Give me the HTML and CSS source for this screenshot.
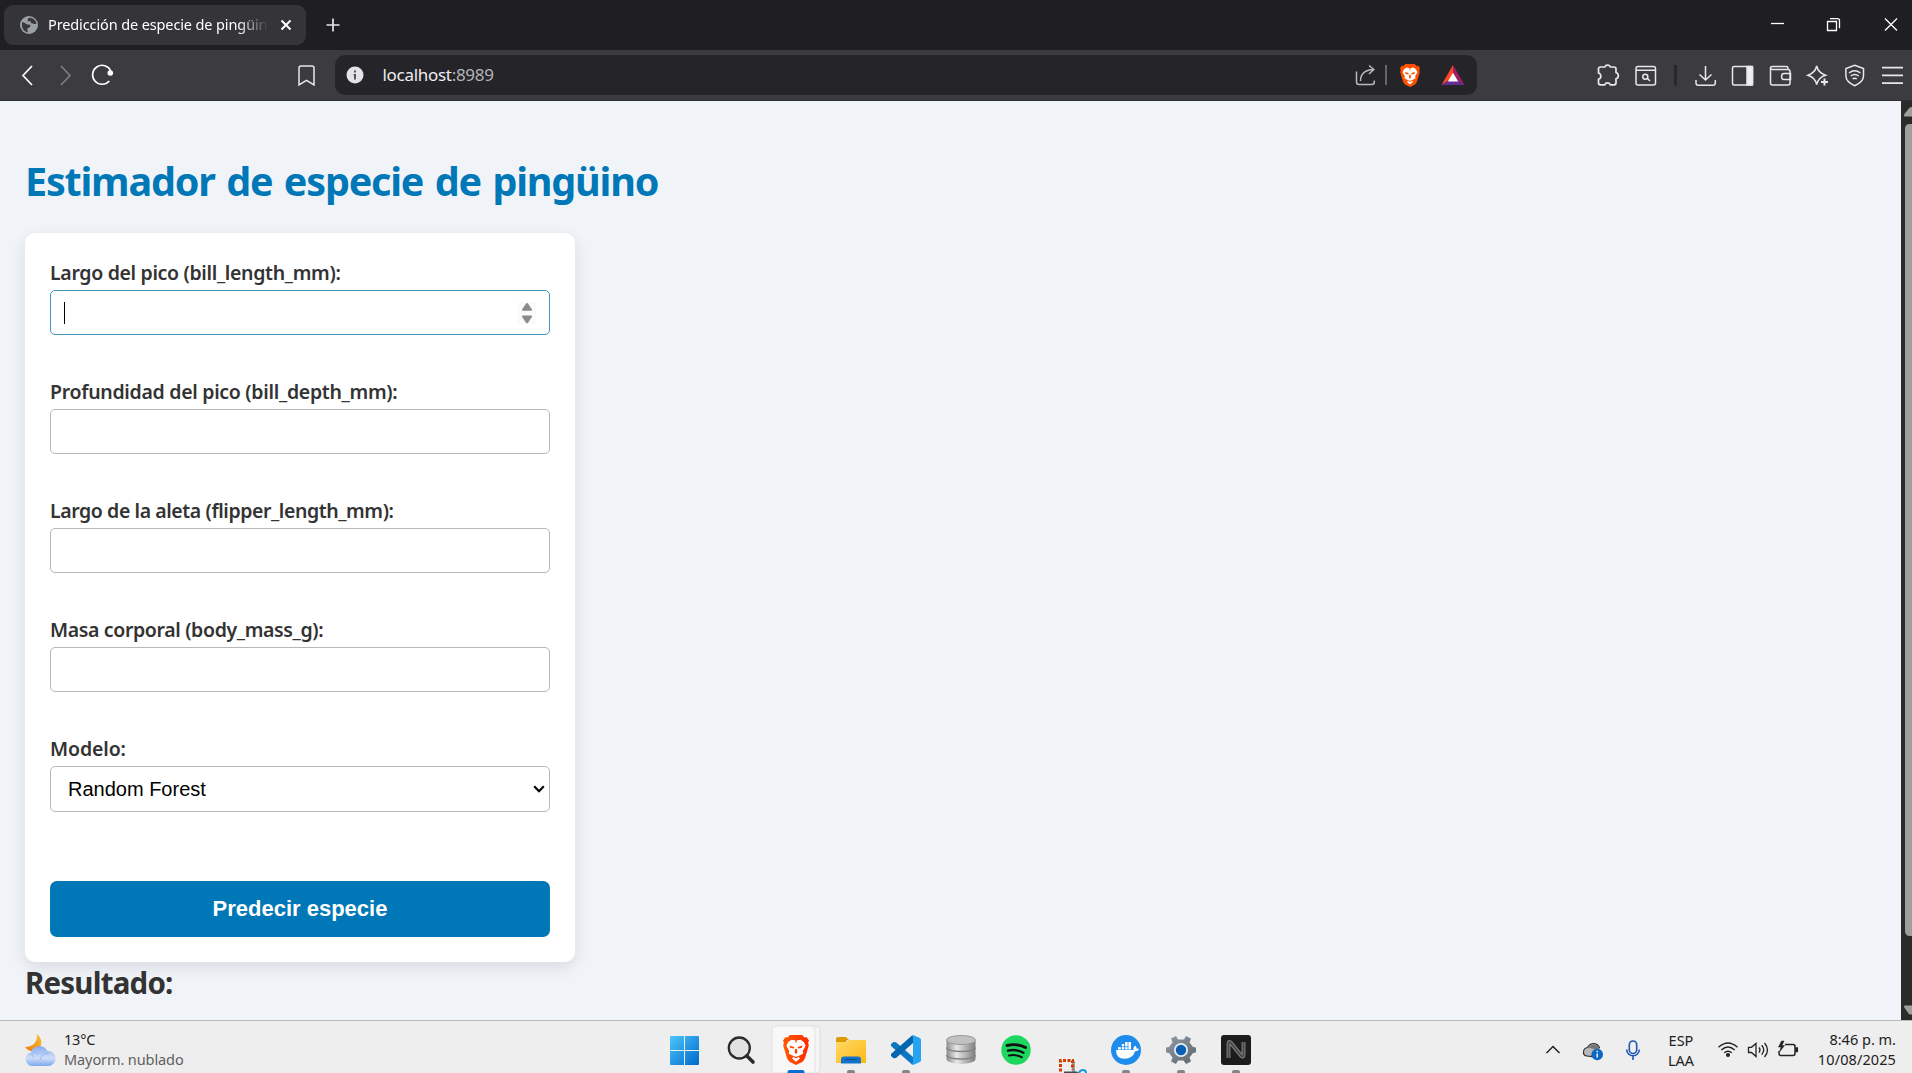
FILE: index.html
```html
<!DOCTYPE html>
<html lang="es">
<head>
<meta charset="utf-8">
<title>Predicción de especie de pingüino</title>
<link rel="stylesheet" href="styles.css">
</head>
<body>
<svg class="defs" width="0" height="0" aria-hidden="true">
  <defs>
    <linearGradient id="braveGrad" x1="0" x2="1" y1="0" y2="0"><stop offset="0" stop-color="#ff5a00"/><stop offset="1" stop-color="#ff2a00"/></linearGradient>
    <linearGradient id="winGrad" x1="0" y1="0" x2="1" y2="1"><stop offset="0" stop-color="#4cc8fa"/><stop offset="1" stop-color="#0067cc"/></linearGradient>
    <linearGradient id="folderGrad" x1="0" y1="0" x2="1" y2="1"><stop offset="0" stop-color="#ffd968"/><stop offset="1" stop-color="#fdb813"/></linearGradient>
    <linearGradient id="dbGrad"><stop offset="0" stop-color="#8c8c8c"/><stop offset=".35" stop-color="#e8e8e8"/><stop offset="1" stop-color="#7d7d7d"/></linearGradient>
    <linearGradient id="gearGrad" x1="0" y1="0" x2="1" y2="1"><stop offset="0" stop-color="#929ba3"/><stop offset="1" stop-color="#5c6670"/></linearGradient>
    <linearGradient id="cloudGrad" x1="0" y1="0" x2="0" y2="1"><stop offset="0" stop-color="#85aaf0"/><stop offset=".6" stop-color="#cfdff8"/><stop offset="1" stop-color="#7ea6ec"/></linearGradient>
    <linearGradient id="moonGrad" x1="1" y1="0" x2="0" y2="1"><stop offset="0" stop-color="#fbc02f"/><stop offset="1" stop-color="#ee7a13"/></linearGradient>
    <symbol id="lion" viewBox="0 0 26 30">
      <path d="M7 0h12l2.600 2.600 2.200-.3L26 5.700l-.9 2.100.7 2.800-3.900 13-2.300 3.200L13 30l-6.600-3.200-2.300-3.200-3.900-13 .7-2.800L0 5.700l2.200-3.400 2.200.3z"/>
      <path fill="#fff" d="M13 5.500l4.500-.8 3.300 2.300 1.900 3.800-2.400 4.100-.6 1.200.6 2.400-3.600 2.100-1 1 1.200 2-3.900 3.100-3.900-3.100 1.200-2-1-1-3.600-2.100.6-2.400-.6-1.200-2.400-4.100L5.200 7l3.300-2.300z"/>
      <path d="M6.500 10.500l4.800 1.400-.3 1.700-3.700-.6zM19.500 10.500l-4.800 1.400.3 1.700 3.700-.6zM12 14h2l.3 3.800-1.300 1.300-1.300-1.300zM9.400 20.600l3.600 1.500 3.600-1.500.4.700-4 2.300-4-2.300zM12.300 5h1.400l-.3 3h-.8z"/>
    </symbol>
  </defs>
</svg>

<header class="tabstrip">
  <div class="tab">
    <svg class="favicon" width="18" height="18" viewBox="0 0 18 18"><circle cx="9" cy="9" r="9" fill="#9aa0a6"/><path d="M2 6.500c3-.8 3 2 5.500 2 1.800 0 3.500.2 2.700 2-.8 1.500-3 1-3 3.500l1 2.200C4.500 16 1.500 12.500 2 8zM9 1.800c-1 1.500-1.800 2-1.300 3.200 1 .8 2-.3 3 .6.6.8 0 1.900 1.500 1.900 1.600.1 2.200 1 4.200.3C16 4.500 13 1.700 9 1.800z" fill="#38373c"/></svg>
    <span class="tab-title">Predicción de especie de pingüin</span>
    <svg width="12" height="12" viewBox="0 0 12 12" fill="none" stroke="#fff" stroke-width="2"><path d="M1.500 1.500l9 9M10.500 1.500l-9 9"/></svg>
  </div>
  <svg class="newtab" width="14" height="14" viewBox="0 0 14 14" stroke="#e6e6e8" stroke-width="1.700"><path d="M7 .5v13M.5 7h13"/></svg>
  <svg class="wincontrols" width="152" height="50" viewBox="1760 0 152 50" fill="none" stroke="#fff" stroke-width="1.300"><path d="M1771 23.500h13"/><path d="M1827.500 21.500h9v9h-9zM1830 18.700h7.500q2 0 2 2v7.500" /><path d="M1885 18.500l12 12M1897 18.500l-12 12"/></svg>
</header>

<nav class="toolbar">
  <svg width="45" height="50" viewBox="0 50 45 50" class="ic bold"><path d="M32 66l-9 9.500 9 9.500"/></svg>
  <svg width="40" height="50" viewBox="45 50 40 50" class="ic dim"><path d="M61 66l9 9.500-9 9.500"/></svg>
  <svg width="40" height="50" viewBox="85 50 40 50" class="ic reload"><path d="M110.800 71A9.500 9.500 0 1 0 109.300 81"/><circle cx="110.300" cy="73" r="2" fill="#fff"/></svg>
  <svg class="bookmark" width="50" height="50" viewBox="285 50 50 50"><g class="ic"><path d="M299 85V68q0-2 2-2h11q2 0 2 2v17l-7.500-4.700z"/></g></svg>
  <div class="address">
    <svg width="18" height="18" viewBox="0 0 18 18"><circle cx="9" cy="9" r="8.500" fill="#e3e3e8"/><path d="M8 4.500h2v2H8zM7.500 8H10v5.500H8V9.500h-.5z" fill="#55555a"/></svg>
    <span class="url">localhost<span class="port">:8989</span></span>
    <svg class="address-icons" width="131" height="40" viewBox="1346 55 131 40">
      <g fill="none" stroke="#b9b9bd" stroke-width="1.500"><path d="M1356.500 71.500v10.500q0 2.500 2.500 2.500h13q2.300 0 2.300-2.500v-1.500M1360.500 81c0-7 4-11 13-11.500M1369 65.500l4.800 4-4.800 4.500"/></g>
      <path d="M1386 65v20" stroke="#88888c" stroke-width="1.300"/>
      <svg x="1400" y="64" width="20" height="23" fill="#ff5000"><use href="#lion"/></svg>
      <path d="M1453 65l-11.500 20 11.500-7z" fill="#ff4724"/><path d="M1453 65l11.500 20-11.500-7z" fill="#9e1f63"/><path d="M1441.500 85h23l-11.500-8z" fill="#662d91"/><path d="M1453 72.800l-5.200 8.700h10.400z" fill="#fff"/>
    </svg>
  </div>
  <div class="actions">
    <svg width="37" height="50" viewBox="1590 50 37 50" class="ic puzzle"><path d="M1598.500 69q0-2 2-2h4.300a3 3 0 0 1 5.600 0h3.600q2 0 2 2v3.500a3.300 3.300 0 0 1 0 6.300v4q0 2-2 2h-3.700a3 3 0 0 0-5.600 0h-4.200q-2 0-2-2v-3.500a3.300 3.300 0 0 0 0-6.300z"/></svg>
    <svg width="38" height="50" viewBox="1627 50 38 50" class="ic"><rect x="1636" y="66.500" width="19.500" height="18.500" rx="2"/><path d="M1636 70.200h19.500M1647.500 78.500l2.500 2.500"/><circle cx="1645.300" cy="76.700" r="2.500"/></svg>
    <svg width="21" height="50" viewBox="1665 50 21 50"><path d="M1675.500 65v20.500" stroke="#242428" stroke-width="2.500"/></svg>
    <svg width="38" height="50" viewBox="1686 50 38 50" class="ic"><path d="M1705.500 66v13.500M1699.500 74.500l6 5.500 6-5.500M1696 80v3q0 2.300 2.300 2.300h14.700q2.300 0 2.300-2.300v-3"/></svg>
    <svg width="37" height="50" viewBox="1724 50 37 50" class="ic"><rect x="1732.500" y="66.500" width="20" height="18.500" rx="1.500"/><path d="M1747 66.500h5.500V85h-5.500z" fill="#efeff1"/></svg>
    <svg width="38" height="50" viewBox="1761 50 38 50" class="ic"><path d="M1770.500 68v15q0 2 2 2h15.500q2 0 2-2V71.500q0-2-2-2h-15.500q-2 0-2-1.700 0-1.300 2-1.300h14q1.500 0 1.500 2.500M1790.500 73.500h-6.500q-2.300 0-2.300 2.300v1.500q0 2.300 2.300 2.300h6.500z"/></svg>
    <svg width="37" height="50" viewBox="1799 50 37 50" class="ic"><path d="M1816.700 66c1 4.500 3.500 7.500 8.800 9.200-5.300 1.700-7.800 4.700-8.800 9.300-1-4.600-3.500-7.600-8.700-9.300 5.200-1.700 7.700-4.700 8.700-9.200z"/><path d="M1824.500 78.500v7M1821 82h7" stroke-width="2"/></svg>
    <svg width="37" height="50" viewBox="1836 50 37 50" class="ic"><path d="M1854.700 65.200l8.800 3.300v7.500c0 4-4 7.500-8.800 9.700-4.800-2.200-8.800-5.700-8.800-9.700v-7.500zM1849 73q5.700-4.500 11.400 0M1850.700 76q4-3.200 8 0M1852.600 79q2.100-1.600 4.200 0"/></svg>
    <svg width="39" height="50" viewBox="1873 50 39 50" class="ic"><path d="M1882 67.700h21M1882 75.400h21M1882 83.200h21" stroke-width="1.800"/></svg>
  </div>
</nav>

<div class="viewport">
  <main class="page">
    <h1>Estimador de especie de pingüino</h1>
    <form class="card">
      <div class="field"><label class="t1">Largo del pico (bill_length_mm):</label>
        <div class="input focused"><i class="caret"></i><svg width="18" height="22" viewBox="0 0 18 22" fill="#8b8b8b"><path fill="#fafafa" d="M0 0h18v22H0z"/><path d="M8 1.500q1-1 2 0l4 6q.3 1.200-1 1.200H5q-1.300 0-1-1.200zM8 20.800q1 1 2 0l4-6q.3-1.200-1-1.200H5q-1.300 0-1 1.200z"/></svg></div></div>
      <div class="field"><label class="t2">Profundidad del pico (bill_depth_mm):</label><div class="input"></div></div>
      <div class="field"><label class="t3">Largo de la aleta (flipper_length_mm):</label><div class="input"></div></div>
      <div class="field"><label class="t4">Masa corporal (body_mass_g):</label><div class="input"></div></div>
      <div class="field"><label class="t5">Modelo:</label>
        <div class="input select"><span>Random Forest</span><svg width="12" height="8" viewBox="0 0 12 8" fill="none" stroke="#000" stroke-width="2.200"><path d="M1.200 1.200L6 6.200l4.800-5"/></svg></div></div>
      <button class="submit" type="button">Predecir especie</button>
    </form>
    <h2>Resultado:</h2>
  </main>
  <svg class="scrollbar" width="11" height="919" viewBox="1901 101 11 919" fill="#9f9f9f"><path d="M1904 115.500q0-1 .8-2l4.500-5.500q1-1 2.700-1v9.500h-7q-1 0-1-1zM1912 124h-2q-5 0-5 5v802q0 5 5 5h2zM1904 1006.500q0-1 1-1h7v9h-1.500q-1.300-.2-2-1l-3.800-5.500q-.7-1-.7-1.500z"/></svg>
</div>

<footer class="taskbar">
  <div class="weather">
    <svg width="31" height="34" viewBox="0 0 31 34"><path d="M12 1c5 4 6 11 1 16-5 3-10 1-13-3 7 0 13-4 12-13z" fill="url(#moonGrad)"/><path d="M7 33a7 7 0 0 1-1-13.800A9 9 0 0 1 22.500 18 7.500 7.500 0 0 1 23.500 33z" fill="url(#cloudGrad)"/><path d="M9 25q-4-4 0-6 2 0 4 2M15 27q2-7 8.500-7" fill="none" stroke="#86aaf0" stroke-width="1" opacity=".7"/></svg>
    <div class="weather-text"><span class="temp">13°C</span><span class="sky">Mayorm. nublado</span></div>
  </div>
  <div class="apps">
    <svg width="57" height="52" viewBox="655 1021 57 52"><path fill="url(#winGrad)" d="M671 1036h13v14h-14v-13q0-1 1-1zM685 1036h13q1 0 1 1v13h-14zM670 1051h14v14h-13q-1 0-1-1zM685 1051h14v13q0 1-1 1h-13z"/></svg>
    <svg width="56" height="52" viewBox="712 1021 56 52" fill="none" stroke="#2b2b2b"><circle cx="739.300" cy="1048" r="10.500" fill="#e0e2e4" stroke-width="2.300"/><path d="M747 1056l6 6" stroke-width="3.600" stroke-linecap="round"/></svg>
    <svg width="56" height="52" viewBox="768 1021 56 52"><path d="M812 1026h3q5 0 5 5v37q0 5-5 5h-3z" fill="#f5f5f5" stroke="#dedede"/><path d="M777 1026h33q5 0 5 5v42h-43v-42q0-5 5-5z" fill="#f8f8f8" stroke="#e2e2e2"/><svg x="783" y="1035" width="26" height="30" fill="url(#braveGrad)"><use href="#lion"/></svg><rect x="787.500" y="1070" width="17" height="5" rx="2" fill="#0a6fd0"/></svg>
    <svg width="55" height="52" viewBox="824 1021 55 52"><path d="M836 1039q0-2 2-2h8l3 3h-2l-2 3h-9z" fill="#dd9a00"/><path d="M836 1042h10l3-2h16q1 0 1 1v22h-30z" fill="url(#folderGrad)"/><path d="M841 1063.500v-4q0-3 3-3h14q3 0 3 3v4z" fill="#1473c8"/><path d="M845 1059.500h12" stroke="#0a4a92" stroke-width="1"/><rect x="847" y="1070" width="8" height="5" rx="2" fill="#858585"/></svg>
    <svg width="54" height="52" viewBox="879 1021 54 52"><path d="M891 1044l2.500-2 2.500.3 17 14.700v7l-1 .5L891 1046z" fill="#0c78c4"/><path d="M891 1056l2.500 2.200 2.500-.3 17-15v-7l-1-.5L891 1054z" fill="#0566b0"/><path d="M913 1035l7 3 1 1.500v21l-1 1.500-7 3-1-.7 1-1.800v-25l-1-1.800z" fill="#27a4f0"/><rect x="902" y="1070" width="8" height="5" rx="2" fill="#858585"/></svg>
    <svg width="56" height="52" viewBox="933 1021 56 52"><path d="M946.500 1040v19a14.500 5 0 0 0 29 0v-19z" fill="url(#dbGrad)"/><g fill="none" stroke="#828282" stroke-width="1.300"><path d="M946.500 1047.500a14.500 4 0 0 0 29 0M946.500 1055a14.500 4 0 0 0 29 0"/></g><ellipse cx="961" cy="1040" rx="14.500" ry="4.500" fill="#c1c1c1" stroke="#999"/></svg>
    <svg width="55" height="52" viewBox="989 1021 55 52"><circle cx="1016" cy="1050" r="14.700" fill="#1ed760"/><g fill="none" stroke="#111" stroke-linecap="round"><path d="M1007 1045.500q10-2.500 18.500 2" stroke-width="2.900"/><path d="M1008 1050.700q8-2 15.500 2" stroke-width="2.400"/><path d="M1009 1055.500q6.500-1.600 13 1.800" stroke-width="1.900"/></g></svg>
    <svg width="55" height="52" viewBox="1044 1021 55 52"><path d="M1072 1061h3v12h-3z" fill="#999fa5"/><path d="M1060.500 1071.500v-11h12v9" fill="none" stroke="#d83b01" stroke-width="3" stroke-dasharray="3 1.500"/><path d="M1064 1071.500h13l2 2h-15z" fill="#45494d"/><path d="M1079 1073q1-3 4-3t3 3" fill="none" stroke="#1899e4" stroke-width="2"/></svg>
    <svg width="55" height="52" viewBox="1099 1021 55 52"><circle cx="1126" cy="1050" r="15" fill="#1d8ceb"/><path fill="#fff" d="M1116 1050h17.500q-.4-2.700 1.500-4.500 1.600 1 1.700 3 1.600-.3 2.500.4-1 2.300-4 2.400-2.600 7.500-10.700 7.500-8.500 0-8.500-8.800zM1118 1047h3v2.500h-3zM1121.500 1044h3v5.500h-3zM1125 1042h6v7.500h-6z"/><path d="M1117.500 1046.700h11M1121.200 1043v7M1124.700 1043v7M1128 1041v9" stroke="#1d8ceb" stroke-width=".7"/><rect x="1122" y="1070" width="8" height="5" rx="2" fill="#858585"/></svg>
    <svg width="55" height="52" viewBox="1154 1021 55 52"><path d="M1176 1036l2 3.500h6l2-3.500 5 2.500-1.500 4 3.500 4.500 3 .5v5l-3 .5-3.500 4.500 1.500 4-5 2.500-2.500-3.500h-5.500l-2 3.500-5-2.500 1.500-4-3.500-4.500-3-.5v-5l3-.5 3.500-4.500-1.500-4z" fill="url(#gearGrad)"/><circle cx="1181" cy="1050" r="7" fill="#e9edf0"/><circle cx="1181" cy="1050" r="5.200" fill="#0a5eb5"/><rect x="1177" y="1070" width="8" height="5" rx="2" fill="#858585"/></svg>
    <svg width="55" height="52" viewBox="1209 1021 55 52"><rect x="1221" y="1035" width="30" height="30" rx="3" fill="#1c1c1c"/><path d="M1228.500 1058v-14.500q0-2.500 2-1l11 13.500q2 1.500 2-1v-13" fill="none" stroke="#8a8a8a" stroke-width="3.800"/><path d="M1228.500 1058v-14.500q0-2.500 2-1l11 13.500q2 1.500 2-1v-13" fill="none" stroke="#484848" stroke-width="2"/><rect x="1232" y="1070" width="8" height="5" rx="2" fill="#858585"/></svg>
  </div>
  <div class="tray">
    <svg width="28" height="52" viewBox="1540 1021 28 52" class="tk"><path d="M1546.500 1053l6.500-6.500 6.500 6.500"/></svg>
    <svg width="47" height="52" viewBox="1568 1021 47 52"><path d="M1587 1056q-4-.5-3.500-4.500.5-3.500 4-4 2-4 6.500-4 4 .5 5.500 4l-8 9z" fill="#b9b9b9" stroke="#333" stroke-width="1.200"/><path d="M1588 1047.500q5-5.500 10.500-1l1 3h-4z" fill="#777"/><circle cx="1597.200" cy="1054.500" r="5.800" fill="#0a68c2"/><path d="M1597.200 1053.500v4M1597.200 1050.700v1.600" stroke="#fff" stroke-width="1.400"/></svg>
    <svg width="39" height="52" viewBox="1615 1021 39 52" fill="none" stroke="#1c58b4" stroke-width="1.600"><rect x="1629.300" y="1041" width="7.400" height="12.500" rx="3.700"/><path d="M1626.700 1049.500a6.300 6.300 0 0 0 12.600 0M1633 1056v4"/></svg>
    <div class="lang"><span>ESP</span><span>LAA</span></div>
    <svg width="35" height="52" viewBox="1708 1021 35 52" class="tk"><path d="M1718.500 1047.300q9.500-8.600 19 0M1721.300 1050q6.700-6 13.400 0M1724.200 1052.800q3.800-3.200 7.600 0" stroke-width="1.400"/><circle cx="1728" cy="1055" r="1.300" fill="#222"/></svg>
    <svg width="30" height="52" viewBox="1743 1021 30 52" class="tk"><path d="M1748.500 1047.300v5.200h3l4.500 4v-13l-4.500 3.800zM1759 1047.500q2 2.300 0 5M1761.700 1045.300q4 4.500 0 9.300M1764.500 1043q6 7 0 14" stroke-width="1.300"/></svg>
    <svg width="32" height="52" viewBox="1773 1021 32 52" class="tk"><path d="M1785 1044.500h8q2 0 2 2v7q0 2-2 2h-12q-2 0-2-2v-2.500"/><path d="M1796 1048h1.300v3.500h-1.300z" fill="#222"/><path d="M1781.500 1041l-3 6h2.500l-1.500 5 5-6.500h-2.500l2-4.500z" fill="#222" stroke-width=".5"/></svg>
    <div class="clock"><span>8:46 p. m.</span><span class="date">10/08/2025</span></div>
  </div>
</footer>
</body>
</html>
```
FILE: styles.css
```css
* { box-sizing: border-box; }
body {
  margin: 0; width: 1912px; height: 1073px; overflow: hidden;
  display: flex; flex-direction: column;
  font-family: "Noto Sans", sans-serif; color: #333;
}
svg { display: block; flex: none; }
.defs { position: absolute; }

/* tab strip */
.tabstrip { height: 50px; flex: none; background: #1f1e23; display: flex; align-items: center; }
.tab {
  width: 302px; height: 40px; margin-left: 4px; padding: 0 14px 0 16px; border-radius: 9px;
  background: #353439; display: flex; align-items: center;
}
.tab-title {
  flex: 0 0 220px; margin: -2px 12px 0 10px; white-space: nowrap;
  font-size: 14.5px; letter-spacing: -.12px; line-height: 24px; color: #fff;
  -webkit-mask-image: linear-gradient(90deg, #000 190px, transparent 220px);
  mask-image: linear-gradient(90deg, #000 190px, transparent 220px);
}
.newtab { margin-left: 20px; }
.wincontrols { margin-left: auto; }

/* toolbar */
.toolbar { height: 51px; flex: none; background: #3c3b40; border-bottom: 1px solid #302f34; display: flex; align-items: center; }
.ic { fill: none; stroke: #e8e8ea; stroke-width: 1.5; }
.bold { stroke: #fff; stroke-width: 1.7; }
.reload { stroke: #fff; stroke-width: 1.6; }
.dim { stroke: #7d7c81; stroke-width: 1.7; }
.puzzle { stroke-width: 1.7; }
.bookmark { margin-left: 160px; }
.address { width: 1142px; height: 40px; border-radius: 10px; background: #252429; display: flex; align-items: center; padding-left: 11px; }
.url { margin-left: 18.5px; font-size: 17px; letter-spacing: -.3px; line-height: 24px; color: #ededf0; }
.port { color: #b4b4b8; }
.address-icons { margin-left: auto; }
.actions { margin-left: auto; display: flex; }

/* web page */
.viewport { height: 919px; flex: none; display: flex; background: #f0f4f8; }
.page { flex: 1; padding: 48px 25px 0; }
.scrollbar { background: #2b2b2b; }
h1 { margin: 0 0 19px; height: 65px; line-height: 65px; font-size: 39.5px; letter-spacing: -1.2px; word-spacing: 2.5px; color: #0077b6; }
.card {
  width: 550px; height: 729px; padding: 25px 25px 25px; background: #fff;
  border-radius: 10px; box-shadow: 0 5px 15px rgba(0, 0, 0, .1);
  display: flex; flex-direction: column;
}
.field { height: 119px; flex: none; }
label { display: block; height: 32px; line-height: 29px; font-size: 19.5px; font-weight: 600; }
.t1 { letter-spacing: -.33px; }
.t2 { letter-spacing: -.3px; }
.t3 { letter-spacing: -.42px; }
.t4 { letter-spacing: -.36px; }
.t5 { letter-spacing: -.12px; }
.input {
  height: 45px; border: 1px solid #b8b8b8; border-radius: 5px; padding: 0 13px 0 13px;
  display: flex; align-items: center; justify-content: space-between;
}
.focused { border-color: #4494c0; }
.caret { width: 1px; height: 22px; background: #000; }
.select { height: 46px; padding: 0 4px 0 17px; font: 20px "Liberation Sans", Arial, sans-serif; color: #000; }
.submit {
  height: 56px; flex: none; margin-top: 28px; border: 0; border-radius: 7px; background: #0077b6;
  color: #fff; font: bold 22px "Liberation Sans", Arial, sans-serif;
}
h2 { margin: 0; line-height: 42px; font-size: 29.5px; letter-spacing: -.8px; }

/* taskbar */
.taskbar { height: 53px; flex: none; border-top: 1px solid #b9bcc0; background: #eee; display: flex; font-size: 14.5px; line-height: 20px; color: #222; }
.taskbar > div { height: 52px; }
.weather { width: 655px; padding: 12px 0 0 25px; display: flex; gap: 8px; }
.weather-text { display: flex; flex-direction: column; margin-top: -4px; }
.temp { letter-spacing: -.2px; }
.sky { color: #606060; letter-spacing: -.1px; }
.apps { display: flex; }
.tray { margin-left: auto; display: flex; }
.tk { fill: none; stroke: #222; stroke-width: 1.5; }
.lang, .clock { display: flex; flex-direction: column; }
.lang { width: 54px; padding-top: 9px; align-items: center; }
.clock { width: 107px; padding: 8px 16px 0 0; align-items: flex-end; }
.date { letter-spacing: .1px; }
```
